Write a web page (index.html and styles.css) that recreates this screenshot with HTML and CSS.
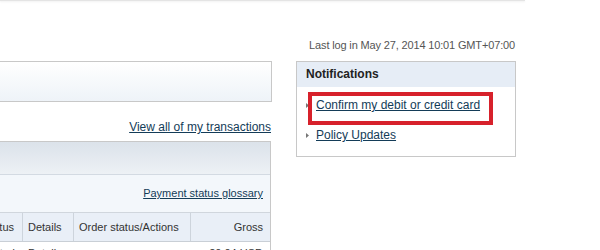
FILE: index.html
```html
<!DOCTYPE html>
<html>
<head>
<meta charset="utf-8">
<link rel="stylesheet" href="styles.css">
</head>
<body>
<div class="topbar"></div>
<div class="lastlog">Last log in May 27, 2014 10:01 GMT+07:00</div>
<div class="main">
  <div class="leftcol">
    <div class="summary"></div>
    <div class="viewall"><a href="#">View all of my transactions</a></div>
    <div class="activity">
      <div class="band"></div>
      <div class="glossary"><a href="#">Payment status glossary</a></div>
      <div class="row head">
        <div class="cell c1"><span>Status</span></div>
        <div class="cell c2">Details</div>
        <div class="cell c3">Order status/Actions</div>
        <div class="cell c4">Gross</div>
      </div>
      <div class="row data">
        <div class="cell c1"><span>Completed</span></div>
        <div class="cell c2">Details</div>
        <div class="cell c3"></div>
        <div class="cell c4">20.04 USD</div>
      </div>
    </div>
  </div>
  <div class="rightcol">
    <div class="notif">
      <div class="notif-head">Notifications</div>
      <ul class="notif-list">
        <li class="item highlighted">
          <span class="bullet"></span><a href="#">Confirm my debit or credit card</a>
          <span class="redbox"></span>
        </li>
        <li class="item">
          <span class="bullet"></span><a href="#">Policy Updates</a>
        </li>
      </ul>
    </div>
  </div>
</div>
</body>
</html>
```
FILE: styles.css
```css
html, body {
  margin: 0;
  padding: 0;
  background: #fff;
  font-family: "Liberation Sans", Arial, sans-serif;
  overflow: hidden;
}
a {
  color: #143c58;
  text-decoration: underline;
}
.topbar {
  width: 525px;
  height: 1px;
  background: #e4e4e4;
  box-shadow: 0 1px 2px rgba(0,0,0,0.08);
}
.lastlog {
  width: 515px;
  text-align: right;
  font-size: 11px;
  line-height: 14px;
  color: #555;
  margin-top: 37px;
  letter-spacing: -0.15px;
}
.main {
  display: flex;
  gap: 24px;
  margin-top: 9px;
  align-items: flex-start;
}
.leftcol {
  width: 272px;
  flex: none;
}
.summary {
  height: 39px;
  border: 1px solid #c8c8c8;
  border-left: none;
  background: linear-gradient(#ffffff, #eef3f8);
}
.viewall {
  text-align: right;
  font-size: 12px;
  line-height: 15px;
  margin-top: 18px;
  margin-bottom: 6px;
  padding-right: 1px;
}
.activity {
  border: 1px solid #c8c8c8;
  border-left: none;
  border-bottom: none;
  margin-right: 1px;
}
.band {
  height: 32px;
  background: linear-gradient(#dbe2ea, #edf1f5);
  border-bottom: 1px solid #d3dae2;
}
.glossary {
  height: 37px;
  background: #f3f7fb;
  text-align: right;
  font-size: 11px;
  line-height: 37px;
  padding-right: 7px;
  border-bottom: 1px solid #d0d6dd;
}
.row {
  display: grid;
  grid-template-columns: 23px 51px 117px 1fr;
  font-size: 11px;
  color: #333;
}
.row.head {
  height: 28px;
  background: #e9eff7;
  border-bottom: 1px solid #c9cfd6;
}
.row.head .cell {
  line-height: 28px;
  border-right: 1px solid #cdd4dc;
}
.row.head .cell:last-child {
  border-right: none;
}
.cell {
  padding-left: 5px;
  white-space: nowrap;
  overflow: hidden;
}
.cell.c1 {
  display: flex;
  justify-content: flex-end;
  padding-left: 0;
  padding-right: 8px;
}
.cell.c4 {
  text-align: right;
  padding-right: 7px;
}
.row.data .cell {
  line-height: 22px;
}
.rightcol {
  width: 220px;
  flex: none;
}
.notif {
  border: 1px solid #c8c8c8;
  height: 94px;
}
.notif-head {
  height: 25px;
  background: #e6edf6;
  font-weight: bold;
  font-size: 12px;
  line-height: 25px;
  color: #222;
  padding-left: 9px;
}
.notif-list {
  list-style: none;
  margin: 0;
  padding: 11px 0 0 9px;
}
.item {
  position: relative;
  display: flex;
  align-items: center;
  height: 15px;
  font-size: 12px;
  line-height: 15px;
  margin-bottom: 15px;
}
.bullet {
  width: 3px;
  height: 5px;
  margin-right: 7px;
  background:
    radial-gradient(circle, #777 0.8px, transparent 1px) 0 0 / 2px 2px;
  clip-path: polygon(0 0, 100% 50%, 0 100%);
}
.redbox {
  position: absolute;
  left: 2px;
  top: -6px;
  width: 177px;
  height: 25px;
  border: 4px solid #d7212b;
  pointer-events: none;
}
```
